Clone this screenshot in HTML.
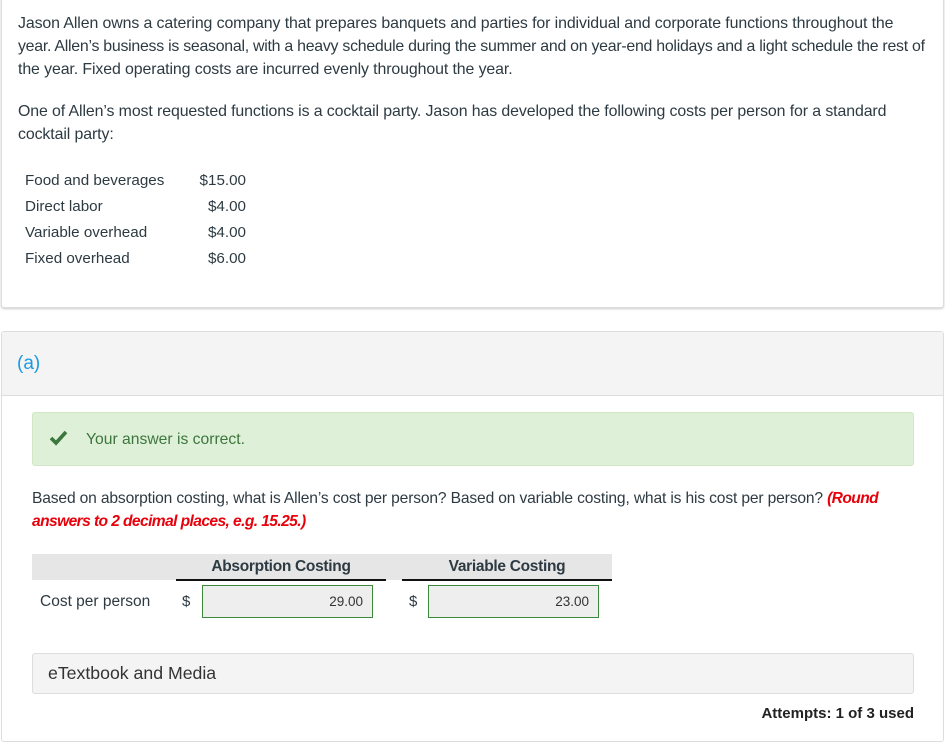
<!DOCTYPE html>
<html><head><meta charset="utf-8"><style>
*{margin:0;padding:0;box-sizing:border-box}
body{width:945px;height:742px;background:#fff;font-family:"Liberation Sans",sans-serif;color:#2d3a42;position:relative;overflow:hidden;font-size:14px}
.a{position:absolute;white-space:nowrap}
.card{position:absolute;border:1px solid #ddd;border-radius:3px;background:#fff}
.r{text-align:right}
</style></head><body>
<div class="card" style="left:1px;top:-3px;width:943px;height:311px;box-shadow:0 1px 2px #ccc"></div>
<div class="a" style="left:18px;top:12px;line-height:23px;font-size:15.9px;letter-spacing:-0.1px">Jason Allen owns a catering company that prepares banquets and parties for individual and corporate functions throughout the<br><span style="letter-spacing:-0.26px">year. Allen’s business is seasonal, with a heavy schedule during the summer and on year-end holidays and a light schedule the rest of</span><br>the year. Fixed operating costs are incurred evenly throughout the year.</div>
<div class="a" style="left:18px;top:100px;line-height:23px;font-size:15.9px;letter-spacing:-0.1px">One of Allen’s most requested functions is a cocktail party. Jason has developed the following costs per person for a standard<br>cocktail party:</div>
<div class="a" style="left:25px;top:168px;line-height:26px;font-size:15.2px">Food and beverages<br>Direct labor<br>Variable overhead<br>Fixed overhead</div>
<div class="a r" style="left:176px;width:70px;top:168px;line-height:26px;font-size:15.2px">$15.00<br>$4.00<br>$4.00<br>$6.00</div>

<div class="card" style="left:1px;top:331px;width:943px;height:411px"></div>
<div class="a" style="left:2px;top:332px;width:941px;height:64px;background:#f4f4f4;border-bottom:1px solid #ddd"></div>
<div class="a" style="left:17px;top:353px;font-size:19px;color:#1a9ae0">(a)</div>
<div class="a" style="left:32px;top:412px;width:882px;height:54px;background:#dff0d8;border:1px solid #d0e6c4;border-radius:3px"></div>
<svg class="a" style="left:49px;top:429px" width="20" height="18" viewBox="0 0 20 18"><path d="M2 9 L7 14 L17 3" fill="none" stroke="#3c763d" stroke-width="3.6"/></svg>
<div class="a" style="left:86px;top:431px;color:#3c763d;font-size:15.7px">Your answer is correct.</div>
<div class="a" style="left:32px;top:487px;line-height:23px;font-size:15.6px;letter-spacing:-0.15px">Based on absorption costing, what is Allen’s cost per person? Based on variable costing, what is his cost per person? <b style="color:#e8000b;font-style:italic;letter-spacing:-0.6px">(Round</b><br><b style="color:#e8000b;font-style:italic;letter-spacing:-0.6px">answers to 2 decimal places, e.g. 15.25.)</b></div>
<div class="a" style="left:32px;top:554px;width:580px;height:26px;background:#e6e6e6"></div>
<div class="a" style="left:176px;top:579px;width:210px;height:2px;background:#111"></div>
<div class="a" style="left:402px;top:579px;width:210px;height:2px;background:#111"></div>
<div class="a" style="left:176px;width:210px;text-align:center;top:558px;font-weight:bold;font-size:15.5px;letter-spacing:-0.3px">Absorption Costing</div>
<div class="a" style="left:402px;width:210px;text-align:center;top:558px;font-weight:bold;font-size:15.5px;letter-spacing:-0.3px">Variable Costing</div>
<div class="a" style="left:40px;top:593px;font-size:15.5px">Cost per person</div>
<div class="a" style="left:182px;top:593px;font-size:15px">$</div>
<div class="a r" style="left:202px;top:585px;width:171px;height:33px;background:#eee;border:1px solid #3a8a3a;font-size:13.5px;line-height:31px;padding-right:9px;color:#333">29.00</div>
<div class="a" style="left:409px;top:593px;font-size:15px">$</div>
<div class="a r" style="left:428px;top:585px;width:171px;height:33px;background:#eee;border:1px solid #3a8a3a;font-size:13.5px;line-height:31px;padding-right:9px;color:#333">23.00</div>
<div class="a" style="left:32px;top:653px;width:882px;height:41px;background:#f4f4f4;border:1px solid #ddd;border-radius:3px"></div>
<div class="a" style="left:48px;top:663px;font-size:17.7px;color:#333">eTextbook and Media</div>
<div class="a r" style="left:600px;width:314px;top:705px;font-weight:bold;font-size:15px;color:#222">Attempts: 1 of 3 used</div>
</body></html>
